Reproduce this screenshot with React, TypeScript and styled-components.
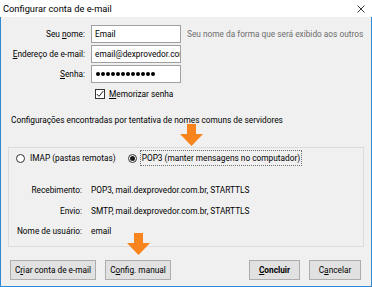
import React from "react";
import styled, { createGlobalStyle } from "styled-components";

const Global = createGlobalStyle`
  html, body { margin: 0; padding: 0; }
  body { width: 372px; height: 287px; overflow: hidden; font-family: Roboto, "Noto Sans", sans-serif; font-size: 8.3px; color: #000; }
  * { box-sizing: border-box; }
`;

const Window = styled.div`
  width: 372px;
  height: 287px;
  display: flex;
  flex-direction: column;
  position: relative;
`;

const TitleBar = styled.div`
  height: 17px;
  background: #fff;
  display: flex;
  align-items: center;
  justify-content: space-between;
  padding: 0 7px 0 3px;
  font-size: 9.3px;
`;

const Body = styled.div`
  flex: 1;
  background: #f0f0f0;
  border: 1px solid #2f8ad6;
  border-top: none;
  padding: 8px 7px 6px 7px;
  display: flex;
  flex-direction: column;
`;

const FormGrid = styled.div`
  display: grid;
  grid-template-columns: 75px 90px auto;
  grid-auto-rows: 18px;
  column-gap: 6px;
  row-gap: 2px;
  padding-left: 2px;
  align-items: center;
`;

const Label = styled.label`
  text-align: right;
  white-space: nowrap;
`;

const Input = styled.div`
  height: 18px;
  background: #fff;
  border: 1px solid #a0a0a0;
  padding: 0 3px;
  display: flex;
  align-items: center;
  overflow: hidden;
  white-space: nowrap;
`;

const Dots = styled.span`
  display: flex;
  gap: 1px;
  padding-left: 1px;
`;

const Dot = styled.span`
  width: 4px;
  height: 4px;
  border-radius: 50%;
  background: #000;
`;

const Hint = styled.span`
  color: #6d6d6d;
  white-space: nowrap;
`;

const CheckRow = styled.div`
  grid-column: 2 / 4;
  display: flex;
  align-items: center;
  gap: 4px;
  padding-left: 4px;
`;

const CheckBox = styled.span`
  width: 10px;
  height: 10px;
  border: 1px solid #333;
  background: #fff;
  display: flex;
  align-items: center;
  justify-content: center;
`;

const U = styled.span`
  text-decoration: underline;
`;

const Found = styled.div`
  margin-top: 11px;
  padding-left: 3px;
  line-height: 12px;
`;

const Panel = styled.div`
  margin-top: 21px;
  border: 1px solid #dcdcdc;
  padding: 2px 7px 4px 7px;
  display: flex;
  flex-direction: column;
`;

const RadioRow = styled.div`
  display: flex;
  align-items: center;
  height: 16px;
  gap: 10px;
`;

const RadioOpt = styled.div`
  display: flex;
  align-items: center;
  gap: 3px;
`;

const RadioCircle = styled.span<{ $checked?: boolean }>`
  width: 9px;
  height: 9px;
  border-radius: 50%;
  border: 1px solid #333;
  background: #fff;
  display: flex;
  align-items: center;
  justify-content: center;
  &::after {
    content: "";
    width: 5px;
    height: 5px;
    border-radius: 50%;
    background: ${(p) => (p.$checked ? "#1a1a1a" : "transparent")};
  }
`;

const RadioLabel = styled.span<{ $focus?: boolean }>`
  border: 1px dotted ${(p) => (p.$focus ? "#707070" : "transparent")};
  height: 16px;
  padding: 0 1px;
  display: flex;
  align-items: center;
`;

const InfoGrid = styled.div`
  display: grid;
  grid-template-columns: 66px auto;
  grid-auto-rows: 20.5px;
  column-gap: 9px;
  margin-top: 14px;
  align-items: center;
`;

const InfoLabel = styled.span`
  text-align: right;
  white-space: nowrap;
`;

const InfoValue = styled.span`
  white-space: nowrap;
`;

const ButtonBar = styled.div`
  margin-top: auto;
  display: flex;
  align-items: center;
  padding: 0 3px 0 2px;
`;

const Group = styled.div`
  display: flex;
  gap: 9px;
`;

const Spacer = styled.div`
  flex: 1;
`;

const Button = styled.button<{ $w: number; $bold?: boolean }>`
  width: ${(p) => p.$w}px;
  height: 20px;
  background: #e1e1e1;
  border: 1px solid #adadad;
  font-family: inherit;
  font-size: 8.3px;
  font-weight: ${(p) => (p.$bold ? 700 : 400)};
  color: #000;
  padding: 0;
  display: flex;
  align-items: center;
  justify-content: center;
  white-space: nowrap;
`;

const Arrow = styled.svg<{ $x: number; $y: number }>`
  position: absolute;
  left: ${(p) => p.$x}px;
  top: ${(p) => p.$y}px;
`;

const OrangeArrow = ({ x, y }: { x: number; y: number }) => (
  <Arrow $x={x} $y={y} width="23" height="22" viewBox="0 0 23 22">
    <path d="M7 0 H16 V10 H23 L11.5 22 L0 10 H7 Z" fill="#f7841c" />
  </Arrow>
);

export default function App() {
  return (
    <>
      <Global />
      <Window>
        <TitleBar>
          <span>Configurar conta de e-mail</span>
          <svg width="8" height="8" viewBox="0 0 8 8">
            <path d="M0.5 0.5 L7.5 7.5 M7.5 0.5 L0.5 7.5" stroke="#222" strokeWidth="0.9" />
          </svg>
        </TitleBar>
        <Body>
          <FormGrid>
            <Label>
              Seu <U>n</U>ome:
            </Label>
            <Input>Email</Input>
            <Hint>Seu nome da forma que será exibido aos outros</Hint>
            <Label>
              <U>E</U>ndereço de e-mail:
            </Label>
            <Input>email@dexprovedor.com.br</Input>
            <span />
            <Label>
              <U>S</U>enha:
            </Label>
            <Input>
              <Dots>
                {Array.from({ length: 12 }).map((_, i) => (
                  <Dot key={i} />
                ))}
              </Dots>
            </Input>
            <span />
            <CheckRow>
              <CheckBox>
                <svg width="8" height="8" viewBox="0 0 8 8">
                  <path d="M0.8 4 L3 6.3 L7.3 1" stroke="#222" strokeWidth="1" fill="none" />
                </svg>
              </CheckBox>
              <span>
                <U>M</U>emorizar senha
              </span>
            </CheckRow>
          </FormGrid>
          <Found>Configurações encontradas por tentativa de nomes comuns de servidores</Found>
          <Panel>
            <RadioRow>
              <RadioOpt>
                <RadioCircle />
                <RadioLabel>IMAP (pastas remotas)</RadioLabel>
              </RadioOpt>
              <RadioOpt>
                <RadioCircle $checked />
                <RadioLabel $focus>POP3 (manter mensagens no computador)</RadioLabel>
              </RadioOpt>
            </RadioRow>
            <InfoGrid>
              <InfoLabel>Recebimento:</InfoLabel>
              <InfoValue>POP3, mail.dexprovedor.com.br, STARTTLS</InfoValue>
              <InfoLabel>Envio:</InfoLabel>
              <InfoValue>SMTP, mail.dexprovedor.com.br, STARTTLS</InfoValue>
              <InfoLabel>Nome de usuário:</InfoLabel>
              <InfoValue>email</InfoValue>
            </InfoGrid>
          </Panel>
          <ButtonBar>
            <Group>
              <Button $w={86}>
                C<U>r</U>iar conta de e-mail
              </Button>
              <Button $w={66}>
                C<U>o</U>nfig. manual
              </Button>
            </Group>
            <Spacer />
            <Group>
              <Button $w={51} $bold>
                <U>C</U>oncluir
              </Button>
              <Button $w={52}>
                C<U>a</U>ncelar
              </Button>
            </Group>
          </ButtonBar>
        </Body>
        <OrangeArrow x={180} y={124} />
        <OrangeArrow x={127} y={233} />
      </Window>
    </>
  );
}
